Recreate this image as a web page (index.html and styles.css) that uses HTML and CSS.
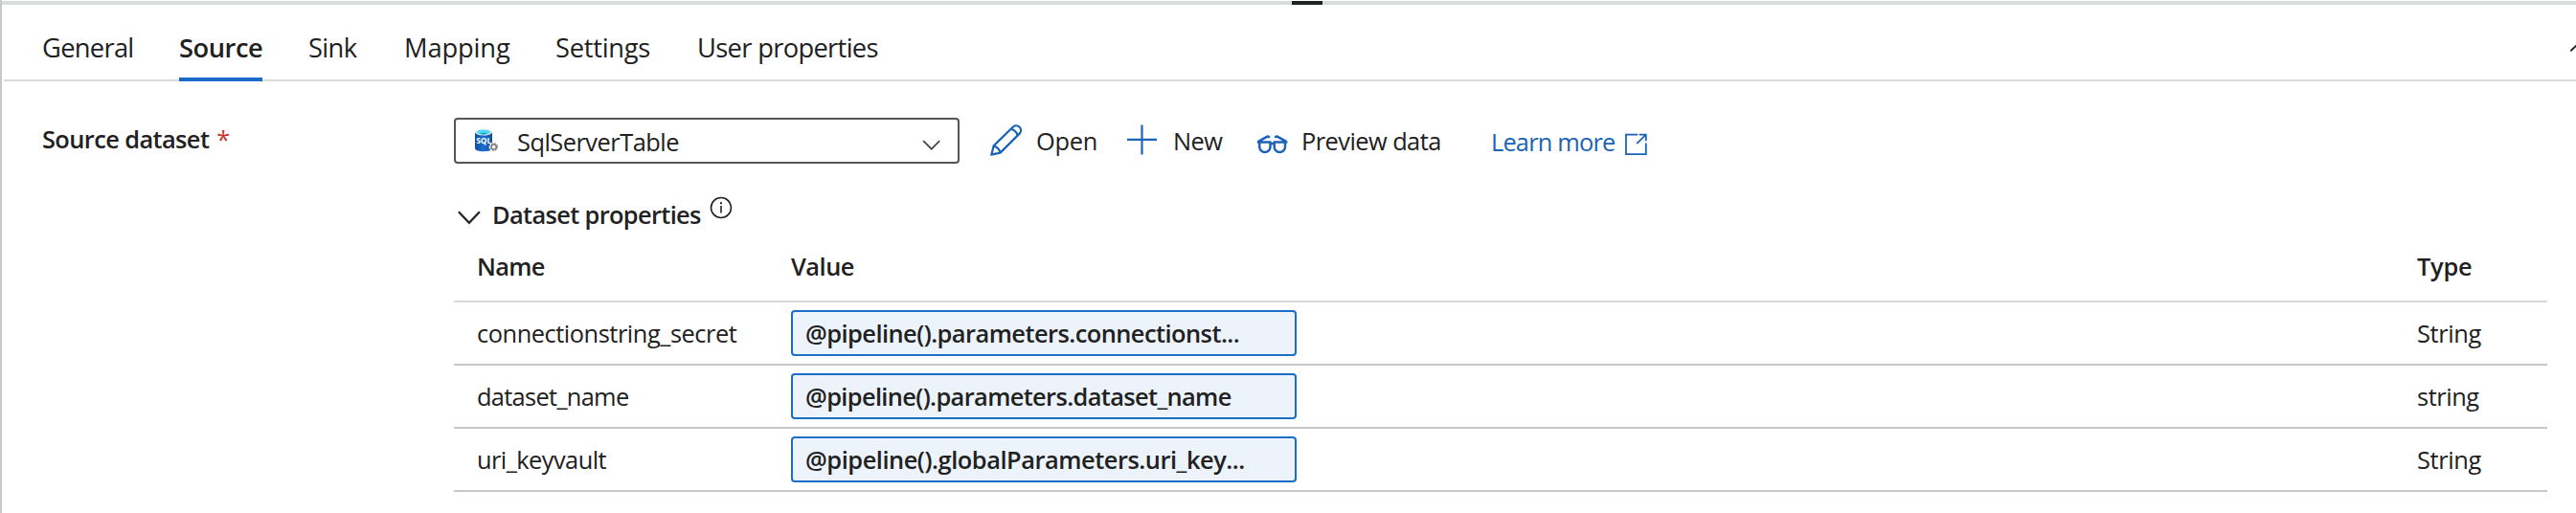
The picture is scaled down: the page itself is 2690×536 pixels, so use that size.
FILE: index.html
```
<!DOCTYPE html>
<html lang="en">
<head>
<meta charset="utf-8">
<title>Copy activity - Source</title>
<link rel="stylesheet" href="styles.css">
</head>
<body>
<div class="panel">
  <div class="splitter"><span class="splitter-handle"></span></div>
  <nav class="tabs">
    <a class="tab general">General</a>
    <a class="tab source active">Source</a>
    <a class="tab sink">Sink</a>
    <a class="tab mapping">Mapping</a>
    <a class="tab settings">Settings</a>
    <a class="tab user-props">User properties</a>
    <svg class="collapse" width="6" height="8" viewBox="0 0 6 8" fill="none" stroke="#222" stroke-width="2"><path d="M.3 6.400 7.500-.5"/></svg>
  </nav>
  <main class="form">
    <label class="label">Source dataset <span class="required">*</span></label>
    <section class="content">
      <div class="toolbar">
        <div class="select">
          <svg class="sql-icon" width="26" height="26" viewBox="0 0 26 26">
            <defs><linearGradient id="db"><stop offset="0" stop-color="#114f9c"/><stop offset=".5" stop-color="#1c6fd0"/><stop offset="1" stop-color="#114f9c"/></linearGradient></defs>
            <path d="M0 4v17c0 2 4 3.200 9 3.200s9-1.200 9-3.200V4z" fill="url(#db)"/>
            <ellipse cx="9" cy="4" rx="9" ry="3.500" fill="#e9eef2"/>
            <ellipse cx="9" cy="4" rx="7.200" ry="2.500" fill="#4fd8f5"/>
            <path d="M4.500 5.800q4.500-2 9 0-4.500 1.500-9 0z" fill="#1a9bc4"/>
            <text class="sql-text" x="9.300" y="16" text-anchor="middle">SQL</text>
            <circle cx="19.700" cy="19.500" r="3.600" fill="none" stroke="#fff" stroke-width="3"/>
            <circle cx="19.700" cy="19.500" r="3.800" fill="none" stroke="#858585" stroke-width="1.500" stroke-dasharray="1.490"/>
            <circle cx="19.700" cy="19.500" r="2.600" fill="#fff" stroke="#7b7b7b" stroke-width="1.500"/>
          </svg>
          <span class="select-value">SqlServerTable</span>
          <svg width="20" height="12" viewBox="0 0 20 12" fill="none" stroke="#444" stroke-width="1.700"><path d="m1.200 1.200 8.500 8.500 8.500-8.500"/></svg>
        </div>
        <button class="command">
          <svg width="34" height="34" viewBox="0 0 34 34" fill="none" stroke="#1b63b5" stroke-width="2.200" stroke-linejoin="round"><path d="M1.300 31.700 3.600 22.400 24 2.500a4.900 4.900 0 0 1 6.900 6.900L10.500 29.600zM3.600 22.400q5.500 1.600 6.900 7.200M21.800 4.700q5.400 1.500 6.900 6.900M1.500 31.500l5-1.200"/></svg>
          <span class="open">Open</span>
        </button>
        <button class="command">
          <svg width="34" height="34" viewBox="0 0 34 34" fill="none" stroke="#1b63b5" stroke-width="2.200"><path d="M15.500.5v31M0 15.800h31"/></svg>
          <span class="new">New</span>
        </button>
        <button class="command">
          <svg width="34" height="34" viewBox="0 0 34 34" fill="none" stroke="#1b63b5" stroke-width="2.500" stroke-linejoin="round"><path d="M3.200 18.600h11.300v4.800a5.650 5.650 0 0 1-11.300 0zM18.700 18.600h11.300v4.800a5.650 5.650 0 0 1-11.300 0zM.8 18.600h2.400V22M32.400 18.600H30V22M14.500 20h4.200M2 17.800l9-5q1.800-.6 2.600 1.200M31.200 17.800l-9-5q-1.800-.6-2.600 1.200"/></svg>
          <span class="preview">Preview data</span>
        </button>
        <a class="link">
          <span class="learn">Learn more</span>
          <svg width="24" height="24" viewBox="0 0 24 24" fill="none" stroke="#1b63b5" stroke-width="1.800"><path d="M13.300 1.600H1v20.600h20.800V10.400M14.700 1.600h7.100v6.700M21.500 1.900l-9.300 9.300"/></svg>
        </a>
      </div>
      <div class="heading">
        <svg width="24" height="16" viewBox="0 0 24 16" fill="none" stroke="#222" stroke-width="2.200"><path d="m.9 1.300 11 11.500L22.900 1.300"/></svg>
        <span class="heading-text">Dataset properties</span>
        <svg class="info" width="24" height="24" viewBox="0 0 24 24"><circle cx="12" cy="12" r="10.500" fill="none" stroke="#222" stroke-width="1.600"/><path d="M11.200 10h1.600v7.500h-1.600zM11 6.300h2v2h-2z" fill="#222"/></svg>
      </div>
      <div class="table">
        <div class="row head"><span class="name">Name</span><span class="value">Value</span><span class="type">Type</span></div>
        <div class="row"><span class="p1">connectionstring_secret</span><div class="input v1">@pipeline().parameters.connectionst...</div><span class="t1">String</span></div>
        <div class="row"><span class="p2">dataset_name</span><div class="input v2">@pipeline().parameters.dataset_name</div><span class="t2">string</span></div>
        <div class="row"><span class="p3">uri_keyvault</span><div class="input v3">@pipeline().globalParameters.uri_key...</div><span class="t1">String</span></div>
      </div>
    </section>
  </main>
</div>
</body>
</html>
```
FILE: styles.css
```
* { box-sizing: border-box; }
body {
  margin: 0;
  background: #fff;
  color: #212121;
  font: 400 25.4px/48px "Open Sans", "Noto Sans", sans-serif;
  white-space: nowrap;
  overflow: hidden;
}
svg { display: block; flex: none; }
.panel { height: 536px; border-left: 2px solid #c8c8c8; }
.splitter {
  height: 5px;
  border-top: 1px solid #fff;
  background: #dadbdb;
  display: flex;
}
.splitter-handle { width: 32px; margin-left: 1347px; background: #212322; }

.tabs {
  height: 80px;
  margin-left: 2px;
  padding-left: 40px;
  border-bottom: 2px solid #dadbdb;
  display: flex;
  gap: 48px;
  font-size: 27.3px;
  line-height: 63px;
}
.tab { height: 80px; padding-top: 13px; border-bottom: 4px solid transparent; }
.active { font-weight: 600; border-color: #1b6ac9; }
.general { width: 95px; letter-spacing: -.7px; }
.source { width: 87px; letter-spacing: -.47px; }
.sink { width: 52px; letter-spacing: -.65px; }
.mapping { width: 110px; letter-spacing: -.13px; }
.settings { width: 100px; letter-spacing: -.27px; }
.user-props { width: 190px; letter-spacing: -.67px; }
.collapse { margin: 42px 0 0 auto; }

.form {
  display: grid;
  grid-template-columns: 430px 2186px;
  padding: 38px 0 0 42px;
}
.label { font-weight: 600; letter-spacing: -.6px; line-height: 44px; }
.required { color: #c2352c; font-weight: 400; margin-left: 2px; }
.toolbar {
  display: grid;
  grid-template-columns: 560px 143px 135px 245px auto;
  grid-template-rows: 48px;
  line-height: 44px;
}
.select {
  width: 528px;
  height: 48px;
  border: 2px solid #555;
  border-radius: 4px;
  padding: 0 17px 0 20px;
  display: flex;
  align-items: center;
}
.sql-text { font: 700 8.5px "Open Sans", sans-serif; fill: #fff; }
.select-value { flex: 1; margin-left: 18px; padding-top: 2px; letter-spacing: -.51px; }
.select svg:last-child { margin-top: 9px; }
.command {
  border: 0;
  padding: 0;
  background: none;
  font: inherit;
  color: inherit;
  text-align: left;
  display: grid;
  grid-template-columns: 47px auto;
  align-items: center;
}
.open { letter-spacing: -.3px; padding-left: 1px; }
.new { letter-spacing: -.5px; padding-left: 1px; }
.preview { letter-spacing: -.55px; }
.link { color: #1b63b5; display: flex; align-items: center; }
.learn { letter-spacing: -.82px; margin-right: 11px; padding-top: 2px; }
.link svg { margin-top: 7px; }

.heading {
  display: flex;
  height: 46px;
  margin-top: 30px;
  padding-left: 4px;
  line-height: 46px;
  font-weight: 600;
}
.heading > svg:first-child { margin-top: 19px; }
.heading-text { margin-left: 12px; letter-spacing: -.65px; }
.info { margin: 4px 0 0 9px; }

.row {
  display: grid;
  grid-template-columns: 328px 1698px auto;
  padding: 8px 0 8px 24px;
  border-bottom: 2px solid #c8c8c8;
}
.head {
  height: 69px;
  padding-top: 0;
  line-height: 62px;
  font-weight: 600;
  border-color: #d8d8d8;
}
.input {
  width: 528px;
  height: 48px;
  padding-left: 13px;
  border: 2px solid #1b6ec8;
  border-radius: 4px;
  background: #ecf3fb;
  font-weight: 600;
  line-height: 44px;
}
.name { letter-spacing: -.67px; }
.value { letter-spacing: -.5px; }
.type { letter-spacing: -.23px; }
.p1 { letter-spacing: -.46px; }
.p2 { letter-spacing: -.69px; }
.p3 { letter-spacing: -.55px; }
.v1 { letter-spacing: -.54px; }
.v2 { letter-spacing: -.635px; }
.v3 { letter-spacing: -.46px; }
.t1 { letter-spacing: -.36px; }
.t2 { letter-spacing: -.45px; }
```
